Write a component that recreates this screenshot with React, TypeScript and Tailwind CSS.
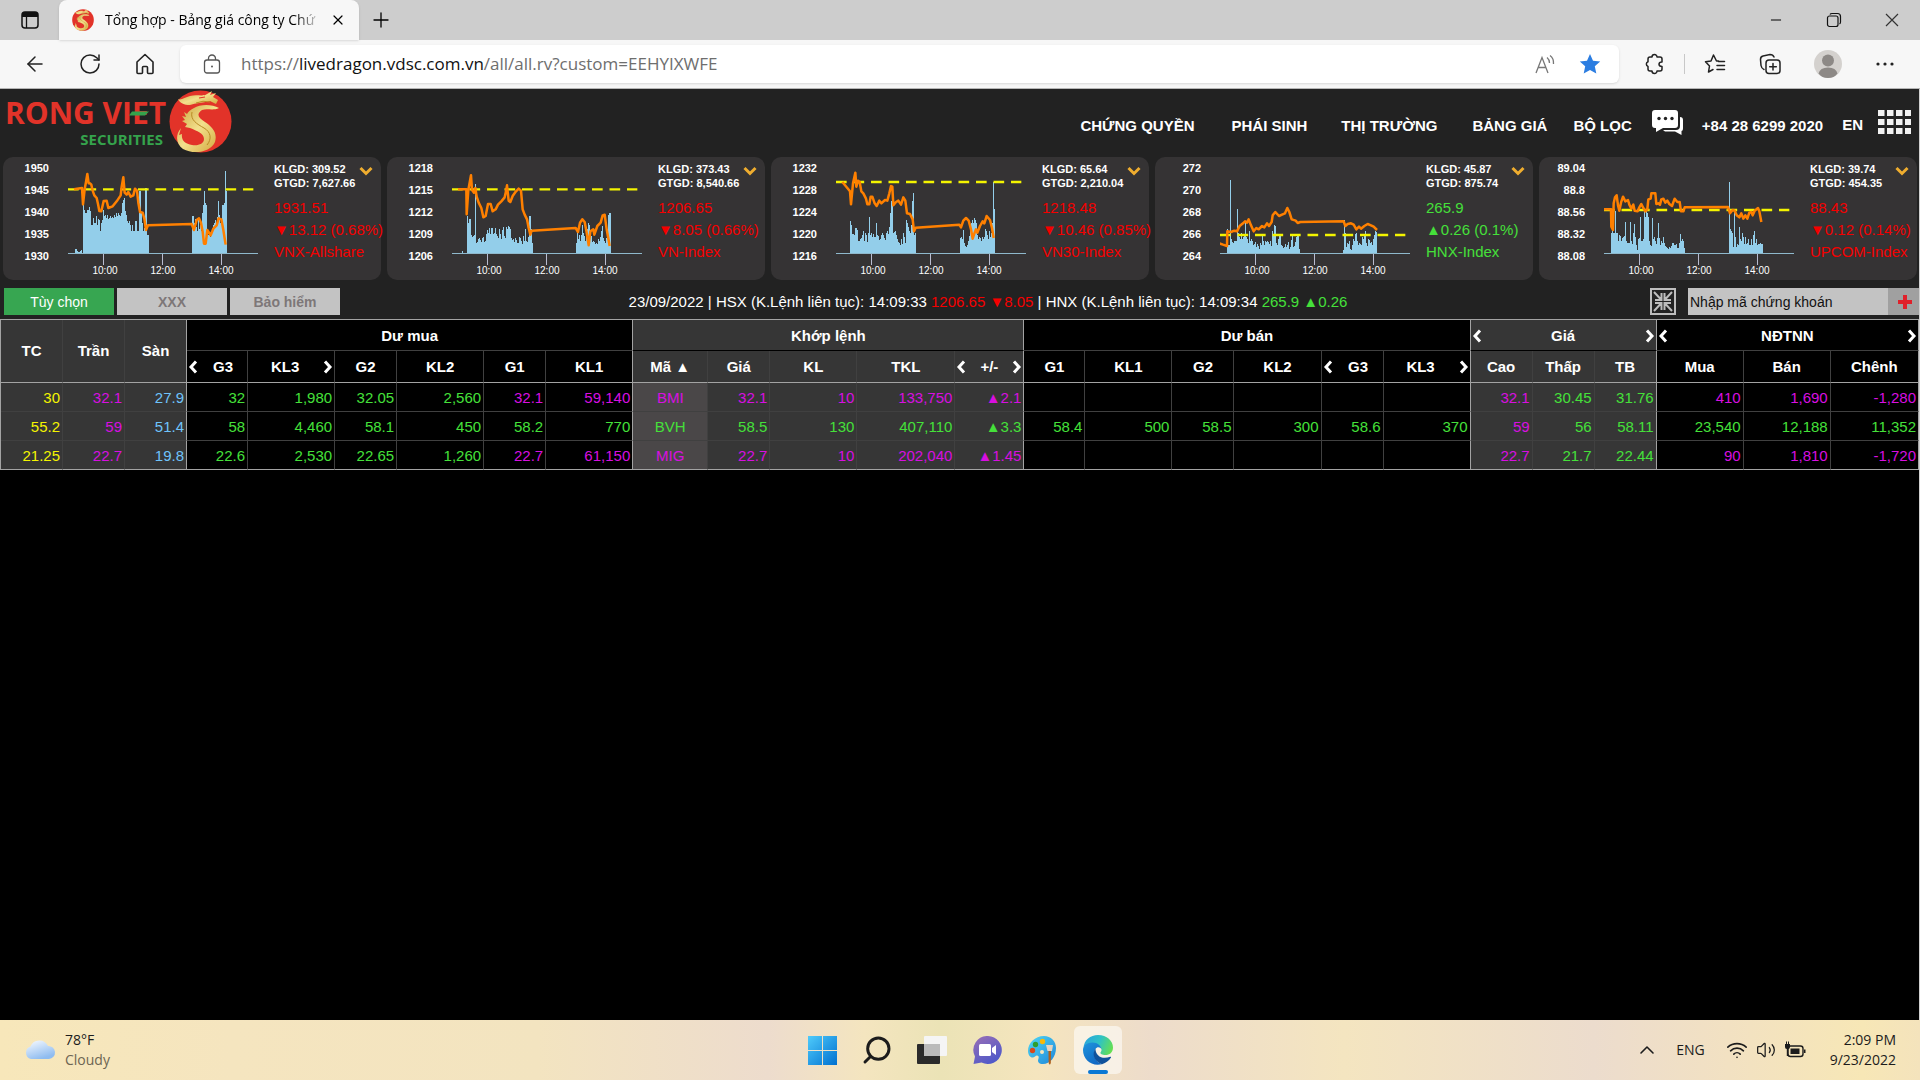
import { ReactNode } from 'react';
import {
   ArrowLeft,
   ChevronUp,
   Minus,
   Plus,
   RotateCw,
   Search,
   Volume2,
   Wifi,
   X,
} from 'lucide-react';
import clsx from 'clsx';

type Bars = { x: number; h: number[] };
type Market = {
   name: string;
   scale: string[];
   volume: string;
   value: string;
   price: string;
   change: string;
   up?: boolean;
   x0: number;
   refY: number;
   bars: Bars[];
   line: string;
};

const markets: Market[] = [
   {
      name: 'VNX-Allshare',
      scale: ['1950', '1945', '1940', '1935', '1930'],
      volume: '309.52',
      value: '7,627.66',
      price: '1931.51',
      change: '13.12 (0.68%)',
      x0: 204,
      refY: 118,
      bars: [
         { x: 225, h: [4, 4, 2, 1, 1, 2, 3] },
         {
            x: 248,
            h: [
               48, 43, 40, 40, 43, 43, 46, 42, 28, 28, 35, 30, 30, 37, 28, 34,
               33, 22, 30, 33, 43, 37, 38, 35, 38, 34, 35, 37, 35, 36, 35, 38,
               36, 40, 37, 40, 38, 37, 40, 50, 53, 55, 42, 38, 32, 30, 32, 28,
               22, 28, 22, 22, 32, 32, 22, 22, 62, 62, 40, 30, 22, 25, 65, 65,
               18, 18,
            ],
         },
         {
            x: 575,
            h: [
               37, 37, 30, 34, 26, 22, 35, 24, 28, 22, 40, 48, 62, 50, 48, 22,
               18, 20, 16, 18, 24, 28, 30, 33, 30, 36, 52, 38, 30, 34, 48, 48,
               50, 82, 62,
            ],
         },
      ],
      line: '222,118 246,114 249,163 254,118 258,96 262,72 266,100 270,100 274,104 278,122 283,136 290,144 294,162 298,183 304,184 311,153 320,152 325,174 338,169 350,154 362,136 365,110 370,82 374,128 380,134 385,126 392,140 400,136 405,116 411,122 415,158 420,186 428,188 433,206 438,240 444,226 575,222 582,240 590,210 597,205 603,218 608,245 612,281 617,281 622,240 632,256 640,236 650,226 656,205 664,208 670,240 677,284',
   },
   {
      name: 'VN-Index',
      scale: ['1218', '1215', '1212', '1209', '1206'],
      volume: '373.43',
      value: '8,540.66',
      price: '1206.65',
      change: '8.05 (0.66%)',
      x0: 204,
      refY: 118,
      bars: [
         { x: 233, h: [2] },
         {
            x: 248,
            h: [
               37, 30, 34, 34, 18, 16, 17, 18, 69, 10, 11, 14, 15, 13, 11, 15,
               16, 11, 12, 19, 23, 20, 25, 19, 25, 25, 19, 20, 25, 19, 17, 15,
               24, 19, 14, 23, 26, 17, 15, 26, 24, 27, 26, 24, 15, 13, 14, 11,
               15, 13, 10, 10, 16, 15, 12, 9, 17, 12, 24, 12, 11, 16, 37, 37,
               24, 10,
            ],
         },
         {
            x: 575,
            h: [
               10, 24, 14, 18, 12, 18, 28, 20, 17, 12, 18, 24, 30, 28, 20, 17,
               11, 12, 11, 9, 10, 9, 14, 12, 16, 22, 27, 15, 12, 10, 15, 20,
               38, 40, 40,
            ],
         },
      ],
      line: '222,118 247,118 248,193 253,120 261,76 264,120 270,128 274,114 278,140 284,158 292,174 298,202 305,198 312,162 320,162 326,184 335,178 342,164 352,154 362,142 366,124 369,106 374,152 379,156 386,138 396,124 404,116 411,122 416,178 422,194 429,208 434,234 439,254 443,242 575,234 582,246 588,218 595,208 602,216 607,242 614,286 619,244 628,238 631,254 640,228 650,218 656,196 662,194 668,238 677,288',
   },
   {
      name: 'VN30-Index',
      scale: ['1232', '1228', '1224', '1220', '1216'],
      volume: '65.64',
      value: '2,210.04',
      price: '1218.48',
      change: '10.46 (0.85%)',
      x0: 198,
      refY: 96,
      bars: [
         {
            x: 241,
            h: [
               32, 28, 19, 19, 18, 25, 25, 23, 12, 12, 14, 15, 18, 22, 12, 20,
               18, 11, 20, 36, 18, 20, 16, 19, 16, 16, 30, 18, 17, 13, 14, 18,
               20, 18, 15, 13, 20, 22, 19, 26, 40, 52, 48, 20, 21, 22, 18, 14,
               11, 10, 8, 14, 9, 20, 16, 10, 33, 30, 26, 22, 20, 28, 52, 60, 18,
               20,
            ],
         },
         {
            x: 569,
            h: [
               15, 16, 14, 23, 10, 7, 6, 8, 12, 17, 24, 30, 33, 30, 35, 33, 30,
               18, 14, 16, 15, 12, 16, 14, 16, 24, 22, 18, 14, 22, 16, 20, 30,
               71, 44,
            ],
         },
      ],
      line: '217,96 232,114 240,124 243,163 249,100 256,68 259,110 264,92 269,96 274,124 280,130 288,146 292,163 298,163 302,140 307,140 314,160 320,168 328,152 334,160 345,150 352,152 358,130 363,108 367,110 370,166 378,156 385,152 393,164 400,142 406,152 411,190 420,192 428,208 432,244 437,233 568,224 573,232 580,212 588,204 596,212 603,238 608,266 614,248 618,238 622,248 630,228 638,214 643,220 650,198 660,210 666,234 671,264',
   },
   {
      name: 'HNX-Index',
      scale: ['272', '270', '268', '266', '264'],
      volume: '45.87',
      value: '875.74',
      price: '265.9',
      change: '0.26 (0.1%)',
      up: true,
      x0: 219,
      refY: 255,
      bars: [
         {
            x: 240,
            h: [
               24, 8, 8, 73, 14, 11, 10, 12, 12, 12, 44, 20, 16, 14, 20, 14, 16,
               18, 31, 16, 14, 10, 22, 12, 14, 12, 8, 9, 11, 6, 9, 7, 4, 10, 8,
               17, 12, 8, 12, 11, 12, 11, 9, 12, 7, 22, 17, 28, 27, 10, 8, 14,
               17, 17, 8, 7, 5, 6, 9, 6, 8, 11, 4, 6, 13, 18, 6, 7, 11, 16, 18,
               18, 4,
            ],
         },
         {
            x: 588,
            h: [
               3, 33, 20, 6, 10, 9, 12, 4, 3, 8, 14, 12, 19, 20, 12, 8, 10, 9,
               8, 16, 14, 18, 22, 10, 7, 14, 13, 10, 11, 8, 14, 18, 22, 21,
            ],
         },
      ],
      line: '217,280 228,284 240,288 241,244 252,246 262,242 270,244 278,228 288,220 294,214 300,218 305,208 312,226 320,244 328,234 335,238 345,228 352,232 360,220 366,228 374,216 377,196 385,186 396,198 405,194 414,190 421,174 427,186 434,208 446,212 452,219 460,216 590,214 595,228 602,222 612,220 620,224 628,238 636,230 642,236 652,228 662,222 672,226 680,230 690,240',
   },
   {
      name: 'UPCOM-Index',
      scale: ['89.04', '88.8', '88.56', '88.32', '88.08'],
      volume: '39.74',
      value: '454.35',
      price: '88.43',
      change: '0.12 (0.14%)',
      x0: 222,
      refY: 180,
      bars: [
         {
            x: 243,
            h: [
               20, 28, 20, 20, 42, 20, 20, 12, 18, 17, 12, 15, 16, 17, 31, 12,
               10, 10, 10, 31, 12, 9, 20, 29, 16, 8, 3, 14, 15, 36, 12, 12, 14,
               42, 36, 44, 40, 36, 12, 8, 7, 35, 14, 16, 12, 9, 15, 30, 15, 8,
               12, 10, 16, 10, 7, 6, 5, 4, 6, 5, 7, 10, 10, 8, 8, 9, 5, 5, 10,
               19, 12, 14, 12, 5,
            ],
         },
         {
            x: 596,
            h: [
               71, 24, 22, 20, 6, 42, 16, 6, 9, 8, 26, 14, 12, 20, 16, 9, 16, 9,
               10, 14, 8, 8, 14, 8, 18, 22, 10, 14, 8, 9, 9, 10, 9, 9,
            ],
         },
      ],
      line: '222,178 243,178 244,230 249,240 251,160 255,142 260,136 264,166 268,182 273,158 279,140 286,154 294,150 298,164 304,176 310,164 314,182 323,184 328,172 334,162 340,174 346,184 352,178 355,148 362,146 364,130 376,130 379,162 385,160 390,164 394,148 400,146 406,158 412,152 418,162 426,168 434,146 442,156 449,156 453,184 460,184 464,172 594,171 600,190 608,180 614,182 620,196 628,202 634,190 640,206 646,196 652,206 658,188 664,186 668,196 674,182 684,174 688,184 694,216',
   },
];

const barsPath = (b: Bars) =>
   b.h.map((h, i) => `M${b.x + i * 3} 310v${-h * 3}h3v${h * 3}z`).join('');

const Chart = ({ m }: { m: Market }) => (
   <svg viewBox="0 0 192 123" className="w-[192px] h-[123px] shrink-0">
      <g transform={`translate(${-m.x0 / 3} -7) scale(0.33333)`}>
         {m.bars.map((b) => (
            <path
               key={b.x}
               d={barsPath(b)}
               fill="#93ceea"
               shapeRendering="crispEdges"
            />
         ))}
      </g>
      <path d="M0 96.5H190" stroke="#8fb9cc" />
      <path d="M35.5 97V108M94.5 97V108M153.5 97V108" stroke="#b9bcd0" />
      <g transform={`translate(${-m.x0 / 3} -7) scale(0.33333)`}>
         <path
            d={`M${m.x0} ${m.refY}h556`}
            stroke="#f4f400"
            strokeWidth="7"
            strokeDasharray="32 20.5"
         />
         <polyline
            points={m.line}
            fill="none"
            stroke="#ff8000"
            strokeWidth="7.5"
            strokeLinejoin="round"
         />
      </g>
      <g
         fill="#fff"
         fontSize="10"
         textAnchor="middle"
         fontFamily="Liberation Sans, sans-serif"
      >
         <text x="37" y="117">
            10:00
         </text>
         <text x="95" y="117">
            12:00
         </text>
         <text x="153" y="117">
            14:00
         </text>
      </g>
   </svg>
);

const MarketCard = ({ m }: { m: Market }) => (
   <section className="flex flex-1 min-w-0 h-[123px] rounded-[10px] bg-[#353334]">
      <div className="w-[46px] shrink-0 text-right text-[11px] leading-[22px] font-bold">
         {m.scale.map((s) => (
            <div key={s}>{s}</div>
         ))}
      </div>
      <div className="pl-[19px] shrink-0">
         <Chart m={m} />
      </div>
      <div className="flex-1 min-w-0 pl-[14px] pt-[5px] whitespace-nowrap">
         <div className="flex justify-between pr-2">
            <div className="text-[11px] leading-[14px] font-bold">
               <div>KLGD: {m.volume}</div>
               <div>GTGD: {m.value}</div>
            </div>
            <button aria-label={`Chọn ${m.name}`} className="h-4 pt-[2px]">
               <svg viewBox="0 0 14 10" className="w-[14px] h-[10px]">
                  <path
                     d="M1.5 2L7 7.5L12.500 2"
                     fill="none"
                     stroke="#efad2f"
                     strokeWidth="3"
                  />
               </svg>
            </button>
         </div>
         <div
            className={clsx(
               'pt-[7px] text-[15px] leading-[22px]',
               m.up ? 'text-[#45e03a]' : 'text-[#f40000]',
            )}
         >
            <div>{m.price}</div>
            <div>
               {m.up ? '▲' : '▼'}
               {m.change}
            </div>
            <div>{m.name}</div>
         </div>
      </div>
   </section>
);

const DragonMark = ({ className }: { className: string }) => (
   <svg viewBox="169 90 63 63" className={className}>
      <defs>
         <linearGradient id="gold" x1="0" y1="0" x2="1" y2="1">
            <stop offset="0" stopColor="#c9a23c" />
            <stop offset="0.5" stopColor="#f3e08c" />
            <stop offset="1" stopColor="#d0a53a" />
         </linearGradient>
      </defs>
      <circle cx="200.500" cy="121.500" r="31" fill="#e23329" />
      <g fill="url(#gold)">
         <path d="M178 99C181 101 185 97 190 96C197 94 203 97 207 94L212 91L210 95L216 93L213 97L218 100L216 104L210 101C202 103 196 103 190 105C184 105 180 103 178 99Z" />
         <path d="M219 108C212 104 200 104 194 108C190 110 188 112 187 114L184 112L186 117L182 116L185 120L182 121L187 124L185 127L190 128C197 131 204 133 204 139C204 144 198 146 192 145C185 144 181 140 182 134L179 135L181 128C175 135 176 144 183 149C194 155 211 152 215 142C218 132 211 126 205 122C198 118 196 114 202 110C207 108 213 111 219 108Z" />
      </g>
      <path
         d="M192 112C190 120 197 124 204 128C211 132 212 139 207 145M196 103Q203 100 210 102"
         fill="none"
         stroke="#b98b25"
         strokeWidth="1"
      />
      <path d="M199 98L205 97" stroke="#e23329" strokeWidth="1.200" />
   </svg>
);

const Chev = ({ dir, label }: { dir: 'l' | 'r'; label: string }) => (
   <button aria-label={label} className="shrink-0 px-px">
      <svg viewBox="0 0 10 14" className="w-[10px] h-[14px]">
         <path
            d={dir === 'l' ? 'M8 1.500L3 7L8 12.500' : 'M2 1.500L7 7L2 12.500'}
            fill="none"
            stroke="#fff"
            strokeWidth="3"
         />
      </svg>
   </button>
);

const Head = ({
   children,
   left,
   right,
}: {
   children: ReactNode;
   left?: boolean;
   right?: boolean;
}) => (
   <div className="flex items-center">
      {left && <Chev dir="l" label="Trước" />}
      <span className="flex-1 whitespace-nowrap text-center">{children}</span>
      {right && <Chev dir="r" label="Sau" />}
   </div>
);

const widths = [
   'w-[62px]', 'w-[62px]', 'w-[62px]',
   'w-[61px]', 'w-[87px]', 'w-[62px]', 'w-[87px]', 'w-[62px]', 'w-[87px]',
   'w-[75px]', 'w-[62px]', 'w-[87px]', 'w-[98px]', 'w-[69px]',
   'w-[61px]', 'w-[87px]', 'w-[62px]', 'w-[87px]', 'w-[62px]', 'w-[87px]',
   'w-[62px]', 'w-[62px]', 'w-[62px]',
   'w-[87px]', 'w-[87px]', 'w-[88px]',
];

const subHeads = [
   'G3<', 'KL3>', 'G2', 'KL2', 'G1', 'KL1',
   'Mã ▲', 'Giá', 'KL', 'TKL', '<+/->',
   'G1', 'KL1', 'G2', 'KL2', 'G3<', 'KL3>',
   'Cao', 'Thấp', 'TB', 'Mua', 'Bán', 'Chênh',
];

// first letter is the colour: y yellow, p purple, b blue, g green
const rows = [
   'y30 p32.1 b27.9 g32 g1,980 g32.05 g2,560 p32.1 p59,140 pBMI p32.1 p10 p133,750 p▲2.1 - - - - - - p32.1 g30.45 g31.76 p410 p1,690 p-1,280',
   'y55.2 p59 b51.4 g58 g4,460 g58.1 g450 g58.2 g770 gBVH g58.5 g130 g407,110 g▲3.3 g58.4 g500 g58.5 g300 g58.6 g370 p59 g56 g58.11 g23,540 g12,188 g11,352',
   'y21.25 p22.7 b19.8 g22.6 g2,530 g22.65 g1,260 p22.7 p61,150 pMIG p22.7 p10 p202,040 p▲1.45 - - - - - - p22.7 g21.7 g22.44 p90 p1,810 p-1,720',
].map((r) => r.split(' '));

const colors: Record<string, string> = {
   y: 'text-[#f4f400]',
   p: 'text-[#d80fe0]',
   b: 'text-[#6fc3fb]',
   g: 'text-[#45e03a]',
   '-': '',
};

const groupEnds = [2, 8, 13, 19, 22, 25];
const edge = (i: number) =>
   groupEnds.includes(i) ? 'border-r-[#a3a3a3]' : 'border-r-[#404040]';
const shade = (i: number) =>
   i < 3 || (i > 8 && i < 14) || (i > 19 && i < 23) ? 'bg-[#363636]' : 'bg-black';

const PriceBoard = () => (
   <table className="w-full table-fixed border-separate border-spacing-0 border-t border-l border-[#a3a3a3] text-[15px] leading-5">
      <colgroup>
         {widths.map((w, i) => (
            <col key={i} className={w} />
         ))}
      </colgroup>
      <thead className="text-white">
         <tr className="h-[31px]">
            {['TC', 'Trần', 'Sàn'].map((t, i) => (
               <th
                  key={t}
                  rowSpan={2}
                  className={clsx(
                     'border-r border-b border-b-[#a3a3a3] bg-[#363636] p-0',
                     edge(i),
                  )}
               >
                  {t}
               </th>
            ))}
            <th colSpan={6} className="border-r border-b border-r-[#a3a3a3] border-b-[#404040] bg-black p-0 pt-[2px]">
               Dư mua
            </th>
            <th colSpan={5} className="border-r border-b border-r-[#a3a3a3] border-b-black bg-[#363636] p-0 pt-[2px]">
               Khớp lệnh
            </th>
            <th colSpan={6} className="border-r border-b border-r-[#a3a3a3] border-b-[#404040] bg-black p-0 pt-[2px]">
               Dư bán
            </th>
            <th colSpan={3} className="border-r border-b border-r-[#a3a3a3] border-b-black bg-[#363636] p-0 pt-[2px]">
               <Head left right>
                  Giá
               </Head>
            </th>
            <th colSpan={3} className="border-r border-b border-r-[#a3a3a3] border-b-[#404040] bg-black p-0 pt-[2px]">
               <Head left right>
                  NĐTNN
               </Head>
            </th>
         </tr>
         <tr className="h-8">
            {subHeads.map((t, i) => (
               <th
                  key={i}
                  className={clsx(
                     'border-r border-b border-b-[#a3a3a3] p-0',
                     edge(i + 3),
                     shade(i + 3),
                  )}
               >
                  <Head left={t.includes('<')} right={t.includes('>')}>
                     {t.replace(/[<>]/g, '')}
                  </Head>
               </th>
            ))}
         </tr>
      </thead>
      <tbody>
         {rows.map((r, n) => (
            <tr key={n} className="h-[29px]">
               {r.map((c, i) => (
                  <td
                     key={i}
                     className={clsx(
                        'border-r border-b pt-[2px] pb-0 pl-0 whitespace-nowrap',
                        i === 9
                           ? 'text-center bg-[#4a4748] pr-0'
                           : 'text-right pr-[2px]',
                        i !== 9 && shade(i),
                        edge(i),
                        n === 2 ? 'border-b-[#a3a3a3]' : 'border-b-[#404040]',
                        colors[c[0]],
                     )}
                  >
                     {c.slice(1)}
                  </td>
               ))}
            </tr>
         ))}
      </tbody>
   </table>
);

const TabBar = () => (
   <div className="flex h-10 items-center bg-[#cdcdcd]">
      <button aria-label="Tab actions" className="w-[59px] flex justify-center">
         <svg viewBox="0 0 18 18" className="w-[18px] h-[18px]">
            <rect x="1" y="1" width="16" height="16" rx="3" fill="none" stroke="#111" strokeWidth="1.500" />
            <path d="M1 6V4a3 3 0 0 1 3-3h10a3 3 0 0 1 3 3v2z" fill="#111" />
            <path d="M5.500 5v12" stroke="#111" strokeWidth="1.300" />
         </svg>
      </button>
      <div className="flex h-full w-[300px] items-center rounded-t-lg bg-[#f7f7f7] pl-[13px] pr-3 shadow-sm">
         <DragonMark className="w-[22px] h-[22px] shrink-0" />
         <span className="ml-[11px] w-[216px] overflow-hidden whitespace-nowrap text-sm [mask-image:linear-gradient(to_right,black_88%,transparent)]">
            Tổng hợp - Bảng giá công ty Chứ
         </span>
         <button aria-label="Close tab" className="ml-[9px]">
            <X className="w-4 h-4" strokeWidth={1.8} />
         </button>
      </div>
      <button aria-label="New tab" className="ml-[10px]">
         <Plus className="w-6 h-6" strokeWidth={1.3} />
      </button>
      <div className="ml-auto flex items-center gap-[42px] pr-5">
         <button aria-label="Minimize">
            <Minus className="w-4 h-4" strokeWidth={1.5} />
         </button>
         <button aria-label="Restore">
            <svg viewBox="0 0 16 16" className="w-4 h-4" fill="none" stroke="#111" strokeWidth="1.200">
               <rect x="1.500" y="4" width="10.500" height="10.500" rx="2" />
               <path d="M4 2.500Q4.500 1.500 6 1.500h5.500a3 3 0 0 1 3 3V10q0 1.500-1 2" />
            </svg>
         </button>
         <button aria-label="Close">
            <svg viewBox="0 0 16 16" className="w-4 h-4" stroke="#333" strokeWidth="1.200">
               <path d="M2 2L14 14M14 2L2 14" />
            </svg>
         </button>
      </div>
   </div>
);

const Toolbar = () => (
   <div className="flex h-[49px] items-center border-b border-[#b5b5b5] bg-[#f7f7f7] text-[#222]">
      <div className="flex w-[180px] items-center gap-[31px] pl-[23px]">
         <button aria-label="Back">
            <ArrowLeft className="w-6 h-6" strokeWidth={1.5} />
         </button>
         <button aria-label="Refresh">
            <RotateCw className="w-6 h-6" strokeWidth={1.5} />
         </button>
         <button aria-label="Home">
            <svg viewBox="0 0 24 24" className="w-6 h-6" fill="none" stroke="#222" strokeWidth="1.600" strokeLinejoin="round">
               <path d="M4 10L12 2.500L20 10V20.500q0 1-1 1H15.500q-1 0-1-1V15.500q0-1-1-1h-3q-1 0-1 1V20.500q0 1-1 1H5q-1 0-1-1Z" />
            </svg>
         </button>
      </div>
      <div className="flex h-[38px] flex-1 items-center rounded-md bg-white shadow-sm">
         <svg viewBox="0 0 18 20" className="ml-[23px] w-[18px] h-5" fill="none" stroke="#555" strokeWidth="1.300">
            <rect x="1.500" y="6" width="15" height="13" rx="2.500" />
            <path d="M5.500 6V4.500a3.500 3.500 0 0 1 7 0V6" />
            <circle cx="9" cy="12.500" r="1" fill="#555" stroke="none" />
         </svg>
         <div role="textbox" aria-label="Address" className="ml-5 flex-1 text-[17px] text-[#6e6e6e]">
            https://<span className="text-[#111]">livedragon.vdsc.com.vn</span>
            /all/all.rv?custom=EEHYIXWFE
         </div>
         <button aria-label="Read aloud">
            <svg viewBox="0 0 22 22" className="w-[22px] h-[22px]" fill="none" stroke="#777" strokeWidth="1.300">
               <path d="M2 20L8 4.500L14 20M4.200 14.500h7.600M13 4.500q2.500 2 2.500 5.500M16 2.500q4 3 3.500 8.500" />
            </svg>
         </button>
         <button aria-label="Favorite" className="ml-[23px] mr-[18px]">
            <svg viewBox="0 0 22 22" className="w-[22px] h-[22px]">
               <path d="M11 1L14 7.700L21.200 8.400L15.800 13.300L17.300 20.500L11 16.900L4.700 20.500L6.200 13.300L0.800 8.400L8 7.700Z" fill="#2b7de1" />
            </svg>
         </button>
      </div>
      <div className="flex w-[301px] items-center pl-[25px]">
         <button aria-label="Extensions">
            <svg viewBox="0 0 22 22" className="w-[22px] h-[22px]" fill="none" stroke="#222" strokeWidth="1.500" strokeLinejoin="round">
               <path d="M8 4a2.500 2.500 0 0 1 5 0h3q2 0 2 2v3q-3 0-3 2.200t3 2.200V16q0 2-2 2h-3a2.500 2.500 0 0 1-5 0H6q-2 0-2-2v-2.600a2.500 2.500 0 0 1 0-4.700V6q0-2 2-2Z" />
            </svg>
         </button>
         <span className="ml-[18px] h-5 w-px bg-[#c8c8c8]" />
         <button aria-label="Favorites" className="ml-[19px]">
            <svg viewBox="0 0 22 22" className="w-[22px] h-[22px]" fill="none" stroke="#222" strokeWidth="1.500" strokeLinejoin="round" strokeLinecap="round">
               <path d="M14.500 8H12.500L9.500 2L7 8L1.500 8.700L5.500 13L4.500 19L9 16.500M14.500 8.500h6M13 12.500h7.500M13 16.500h7.500" />
            </svg>
         </button>
         <button aria-label="Collections" className="ml-[33px]">
            <svg viewBox="0 0 22 22" className="w-[22px] h-[22px]" fill="none" stroke="#222" strokeWidth="1.500" strokeLinecap="round">
               <rect x="7" y="7" width="14" height="13.500" rx="3" />
               <path d="M14 10.500v6.500M10.700 13.700h6.600M5 16.500Q2.500 15.500 2 12.500L1.500 6.500Q1.500 3.500 4 3L11 1.500Q14 1.500 15 4" />
            </svg>
         </button>
         <button aria-label="Profile" className="ml-[33px]">
            <svg viewBox="0 0 28 28" className="w-7 h-7">
               <circle cx="14" cy="14" r="14" fill="#d4d1ce" />
               <circle cx="14" cy="10.500" r="6" fill="#8d8986" />
               <path d="M4.500 23.500Q6 17.500 14 17.500T23.500 23.500Q20 28 14 28T4.500 23.500Z" fill="#8d8986" />
            </svg>
         </button>
         <button aria-label="Settings and more" className="ml-[34px]">
            <svg viewBox="0 0 18 4" className="w-[18px] h-1" fill="#222">
               <circle cx="2" cy="2" r="1.600" />
               <circle cx="9" cy="2" r="1.600" />
               <circle cx="16" cy="2" r="1.600" />
            </svg>
         </button>
      </div>
   </div>
);

const SiteHeader = () => (
   <header className="flex h-[68px] items-center justify-between bg-[#222] pl-[5px] pr-2 pb-1">
      <a href="#" className="flex items-center" aria-label="Rong Viet Securities">
         <div className="relative w-[163px] font-['Open_Sans',sans-serif] font-bold">
            <div className="text-3xl leading-9 whitespace-nowrap text-[#e23329]">
               RONG VIET
            </div>
            <div className="pr-[5px] text-right text-[15px] leading-4 text-[#35a34c]">
               SECURITIES
            </div>
            <svg viewBox="0 0 20 5" className="absolute left-[124px] top-[16px] w-5 h-[5px]">
               <path d="M3 0.500H20L16 4.500H0Z" fill="#35a34c" />
            </svg>
         </div>
         <DragonMark className="ml-px w-[63px] h-[63px]" />
      </a>
      <nav className="flex items-center pt-[10px] text-[15px] leading-5 font-bold whitespace-nowrap">
         <a href="#" className="mr-[37px]">CHỨNG QUYỀN</a>
         <a href="#" className="mr-[34px]">PHÁI SINH</a>
         <a href="#" className="mr-[35px]">THỊ TRƯỜNG</a>
         <a href="#" className="mr-[26px]">BẢNG GIÁ</a>
         <a href="#" className="mr-5">BỘ LỌC</a>
         <button aria-label="Chat" className="mr-[18px] pb-2">
            <svg viewBox="0 0 32 25" className="w-8 h-[25px]">
               <path d="M3 0H23Q26 0 26 3V15Q26 18 23 18H11L4 22V18H3Q0 18 0 15V3Q0 0 3 0Z" fill="#fff" />
               <path d="M28 7Q31 7 31 10V18Q31 21 29.500 21V25L23 21.500H13L11 20H24Q28 20 28 16Z" fill="#fff" />
               <g fill="#222">
                  <circle cx="7" cy="8.500" r="1.700" />
                  <circle cx="13.500" cy="8.500" r="1.700" />
                  <circle cx="20" cy="8.500" r="1.700" />
               </g>
            </svg>
         </button>
         <a href="#" className="mr-[19px]">+84 28 6299 2020</a>
         <button className="mr-[15px] pb-[2px]">EN</button>
         <button aria-label="Menu" className="pb-2">
            <svg viewBox="0 0 33 24" className="w-[33px] h-6" fill="#f1f1f1">
               {[0, 9, 18].map((y) =>
                  [0, 9, 18, 27].map((x) => (
                     <rect key={`${x}${y}`} x={x} y={y} width="6.500" height="6" />
                  )),
               )}
            </svg>
         </button>
      </nav>
   </header>
);

const ActionBar = () => (
   <div className="flex h-[39px] items-center bg-[#222] pb-1 pl-1 pt-2 text-sm">
      <div className="flex gap-[3px]">
         <button className="h-[27px] w-[110px] bg-[#37a651] text-white">
            Tùy chọn
         </button>
         <button className="h-[27px] w-[110px] bg-[#c3c3c3] font-bold text-[#7d7778]">
            XXX
         </button>
         <button className="h-[27px] w-[110px] bg-[#c3c3c3] font-bold text-[#7d7778]">
            Bảo hiểm
         </button>
      </div>
      <p className="flex-1 pr-[14px] text-center text-[15px]">
         23/09/2022 | HSX (K.Lệnh liên tục): 14:09:33{' '}
         <span className="text-[#f40000]">1206.65 ▼8.05</span> | HNX (K.Lệnh
         liên tục): 14:09:34{' '}
         <span className="text-[#45e03a]">265.9 ▲0.26</span>
      </p>
      <button aria-label="Thu nhỏ" className="mr-3">
         <svg viewBox="0 0 26 27" className="w-[26px] h-[27px]">
            <rect width="26" height="27" fill="#bdbdbd" />
            <rect x="2" y="2" width="22" height="23" fill="#222" />
            <path
               d="M4 4L10.500 11M22 4L15.500 11M4 23L10.500 16M22 23L15.500 16M5 12H11.500V5M21 12H14.500V5M5 15H11.500V22M21 15H14.500V22"
               fill="none"
               stroke="#bdbdbd"
               strokeWidth="2"
            />
         </svg>
      </button>
      <input
         type="text"
         aria-label="Mã chứng khoán"
         placeholder="Nhập mã chứng khoán"
         className="h-[27px] w-[200px] bg-[#c3c3c3] px-[2px] text-sm text-black placeholder:text-[#111]"
      />
      <button aria-label="Thêm" className="flex h-[27px] w-[31px] items-center justify-center bg-[#a0a0a0] pl-[2px]">
         <svg viewBox="0 0 14 14" className="w-[14px] h-[14px]">
            <path d="M7 0V14M0 7H14" stroke="#e0202a" strokeWidth="4" />
         </svg>
      </button>
   </div>
);

const EdgeLogo = () => (
   <svg viewBox="0 0 30 30" className="w-[30px] h-[30px]">
      <defs>
         <linearGradient id="edgeTop" x1="0" y1="0.300" x2="1" y2="0.600">
            <stop offset="0" stopColor="#2aa5dd" />
            <stop offset="0.500" stopColor="#2fc2c5" />
            <stop offset="1" stopColor="#66e052" />
         </linearGradient>
         <linearGradient id="edgeLeft" x1="0" y1="0" x2="0.600" y2="1">
            <stop offset="0" stopColor="#1f95dd" />
            <stop offset="1" stopColor="#1168c4" />
         </linearGradient>
      </defs>
      <path d="M0.500 13C1 5 7.500 0 15 0C24 0 30 6 30 12.500C30 17.500 26.500 20 22.500 20C19 20 17 18.800 17.500 17.500C18.500 16 18.500 15.500 18.500 14.500C18 11 14 8.500 9.500 8.500C5 8.500 1.500 10.500 0.500 13Z" fill="url(#edgeTop)" />
      <path d="M0 15C0 10.500 4 7.500 9.500 7.500C14.500 7.500 18.500 11 18.500 14.500C17.500 12 14 11.500 12.500 14C9 20 13 28 19.500 29C9 32 0 25 0 15Z" fill="url(#edgeLeft)" />
      <path d="M12.500 14C9 17.500 10 26 19 29.200C23 28 26 25.500 28 22.500C28.300 21.800 27.800 21.500 27.200 21.800C19 25 12.500 20.500 12.500 14Z" fill="#10529c" />
   </svg>
);

const Taskbar = () => (
   <footer className="grid h-[60px] grid-cols-3 items-center bg-[linear-gradient(90deg,#f7e7ba_0%,#f5e5bf_12%,#f3e4c0_28%,#eddccd_40%,#f4e5bf_45%,#ebe3b6_49%,#f5e5be_54%,#eddccb_60%,#f4e5c0_70%,#ecdccd_83%,#f2e1c2_90%,#f7e7b6_97%,#f4e3bc_100%)] font-['Open_Sans',sans-serif] text-sm text-[#1c1c1c]">
      <button className="flex items-center gap-[9px] pl-6 text-left leading-5">
         <svg viewBox="0 0 32 24" className="w-8 h-6">
            <defs>
               <linearGradient id="cloud" x1="0" y1="0" x2="0.500" y2="1">
                  <stop offset="0" stopColor="#fafcff" />
                  <stop offset="1" stopColor="#8fbcf0" />
               </linearGradient>
            </defs>
            <path d="M7 21A6.500 6.500 0 0 1 6.500 8.500A9.500 9.500 0 0 1 24 8A6.500 6.500 0 0 1 25 21Z" fill="url(#cloud)" />
         </svg>
         <span>
            <span className="block">78°F</span>
            <span className="block text-[#6d6553]">Cloudy</span>
         </span>
      </button>
      <div className="flex items-center justify-center pr-1">
         <button aria-label="Start" className="flex w-[55px] justify-center">
            <svg viewBox="0 0 29 29" className="w-[29px] h-[29px]">
               <defs>
                  <linearGradient id="win" gradientUnits="userSpaceOnUse" x1="0" y1="0" x2="29" y2="29">
                     <stop offset="0" stopColor="#4fcbfb" />
                     <stop offset="1" stopColor="#0070d0" />
                  </linearGradient>
               </defs>
               <path d="M0 0H14V14H0ZM15 0H29V14H15ZM0 15H14V29H0ZM15 15H29V29H15Z" fill="url(#win)" />
            </svg>
         </button>
         <button aria-label="Search" className="flex w-[55px] justify-center">
            <Search className="w-[32px] h-[32px] -scale-x-100" strokeWidth={2.2} />
         </button>
         <button aria-label="Task view" className="flex w-[55px] justify-center">
            <svg viewBox="0 0 30 28" className="w-[30px] h-7">
               <rect y="8" width="23" height="20" rx="1" fill="#2b2b2b" />
               <rect x="7" width="23" height="20" rx="1" fill="#f5f5f5" />
               <rect x="7" y="8" width="16" height="12" fill="#bbb" />
            </svg>
         </button>
         <button aria-label="Chat" className="flex w-[55px] justify-center">
            <svg viewBox="0 0 29 28" className="w-[29px] h-7">
               <defs>
                  <linearGradient id="teams" x1="0" y1="0" x2="0.600" y2="1">
                     <stop offset="0" stopColor="#9a6fb5" />
                     <stop offset="1" stopColor="#5059c9" />
                  </linearGradient>
               </defs>
               <path d="M15 0A14 14 0 1 1 8.500 26.500L0.500 28L2 20.500A14 14 0 0 1 15 0Z" fill="url(#teams)" />
               <rect x="6" y="8" width="12" height="12" rx="1.500" fill="#fff" />
               <path d="M19 12L23 9V19L19 16Z" fill="#fff" />
            </svg>
         </button>
         <button aria-label="Paint" className="flex w-[55px] justify-center">
            <svg viewBox="0 0 28 29" className="w-7 h-[29px]">
               <defs>
                  <linearGradient id="pal" x1="0" y1="0" x2="1" y2="1">
                     <stop offset="0" stopColor="#4fd8f5" />
                     <stop offset="1" stopColor="#1f86d8" />
                  </linearGradient>
               </defs>
               <path d="M16 0C23 0 28 5 28 12C28 21 22 28 15 28C11 28 9 26 10.500 22.500C11.500 20 9 18.500 7 20.500C4 23.500 0 20 0 15C0 7 7 0 16 0Z" fill="url(#pal)" />
               <circle cx="14.500" cy="5.500" r="2.700" fill="#f7b90a" />
               <circle cx="7.500" cy="8.500" r="2.700" fill="#2e9e2e" />
               <circle cx="4.500" cy="14.500" r="2.700" fill="#d8481c" />
               <circle cx="14" cy="16" r="2" fill="#f4e5bf" />
               <path d="M20.500 15H23L22.800 27Q21.700 30 20.700 27Z" fill="#b0601c" />
               <path d="M18 9H25L24 15H19.500Z" fill="#e4d3c0" />
            </svg>
         </button>
         <button aria-label="Microsoft Edge" className="flex h-12 w-12 flex-col items-center rounded-md bg-white/55 pt-[9px] ml-1">
            <EdgeLogo />
            <span className="mt-[5px] h-1 w-5 rounded-full bg-[#0a78d4]" />
         </button>
      </div>
      <div className="flex items-center justify-end pr-6">
         <button aria-label="Hidden icons">
            <ChevronUp className="w-6 h-6" strokeWidth={1.6} />
         </button>
         <button className="ml-[17px]">ENG</button>
         <button className="ml-[21px] flex items-center gap-2" aria-label="Network, volume, battery">
            <Wifi className="w-[22px] h-[22px]" strokeWidth={1.8} />
            <Volume2 className="w-[20px] h-[20px]" strokeWidth={1.5} />
            <svg viewBox="0 0 22 18" className="w-[22px] h-[18px]">
               <rect x="4" y="5" width="15" height="10.500" rx="2.500" fill="none" stroke="#1c1c1c" strokeWidth="1.400" />
               <rect x="6.500" y="7.500" width="9" height="5.500" fill="#1c1c1c" />
               <path d="M20 8.500h1.500v3.500H20ZM1 3H2V0.500H3V3H4V0.500H5V3H6V6Q6 8 4.200 8V15H2.800V8Q1 8 1 6Z" fill="#1c1c1c" />
            </svg>
         </button>
         <button className="ml-6 text-right leading-5">
            <span className="block">2:09 PM</span>
            <span className="block">9/23/2022</span>
         </button>
      </div>
   </footer>
);

const App = () => {
   return (
      <div className="flex min-h-screen flex-col bg-black">
         <div className="font-['Open_Sans',sans-serif]">
            <TabBar />
            <Toolbar />
         </div>
         <main className="flex-1 border-r border-[#d0d0d0] font-['Liberation_Sans',Arial,sans-serif] text-white">
            <SiteHeader />
            <div className="flex gap-[6px] bg-[#222] pl-[3px] pr-[2px]">
               {markets.map((m) => (
                  <MarketCard key={m.name} m={m} />
               ))}
            </div>
            <ActionBar />
            <PriceBoard />
         </main>
         <Taskbar />
      </div>
   );
};

export default App;
